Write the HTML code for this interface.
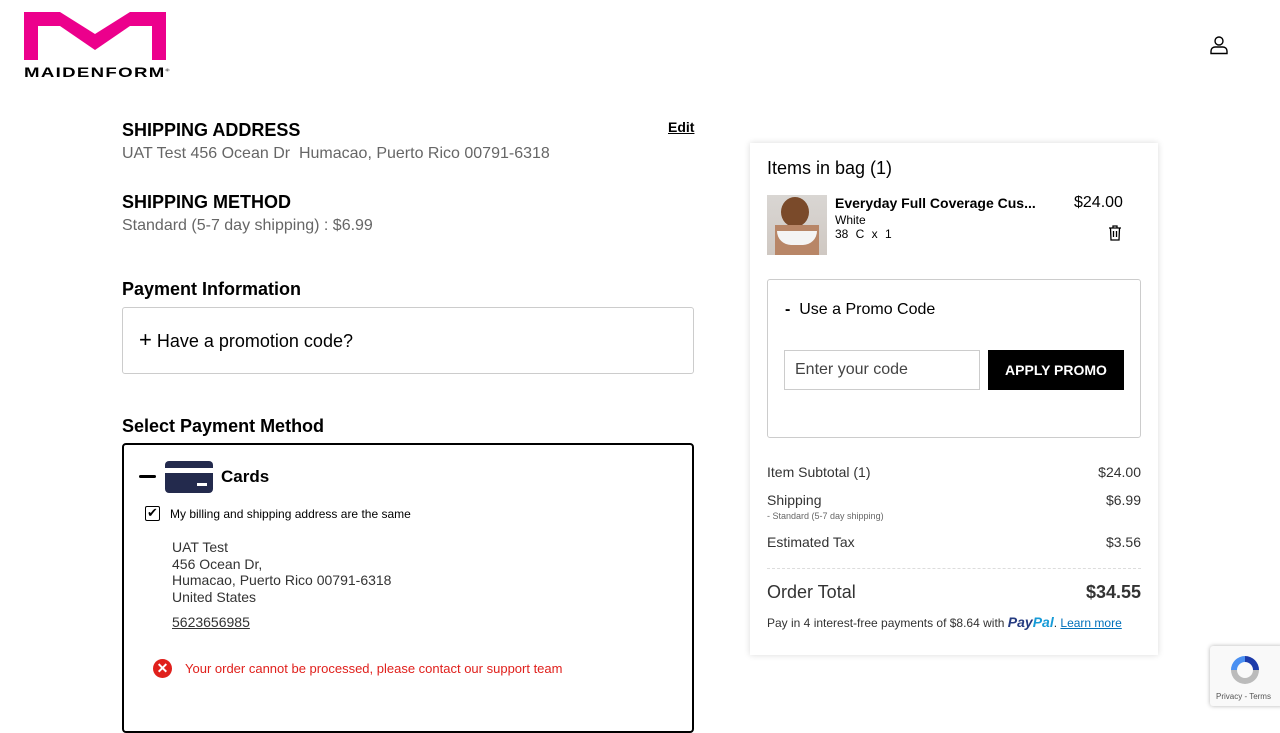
<!DOCTYPE html>
<html><head><style>
*{box-sizing:border-box;margin:0;padding:0}
body{width:1280px;height:720px;overflow:hidden;background:#fff;font-family:"Liberation Sans",sans-serif;color:#000;position:relative}
.a{position:absolute}
h2{font-size:18px;font-weight:bold;position:absolute}
.g{color:#666;font-size:16px;position:absolute}
</style></head><body>
<svg class="a" style="left:24px;top:12px" width="142" height="48" viewBox="0 0 142 48"><path d="M0 0H36L71 22L106 0H142V48H128V14H106L71 38L36 14H14V48H0Z" fill="#ec008c"/></svg>
<div class="a" style="left:24px;top:64px;font-size:14px;font-weight:bold;letter-spacing:1px;transform:scaleX(1.33);transform-origin:0 0">MAIDENFORM<sup style="font-size:4px">®</sup></div>
<svg class="a" style="left:1209px;top:35px" width="20" height="20" viewBox="0 0 20 20" fill="none" stroke="#000" stroke-width="1.4"><circle cx="10" cy="6" r="4"/><path d="M2 18.5V16a4 4 0 0 1 4-4h8a4 4 0 0 1 4 4v2.5Z"/></svg>

<h2 style="left:122px;top:120px">SHIPPING ADDRESS</h2>
<div class="a" style="left:668px;top:119px;font-size:14px;font-weight:bold;text-decoration:underline">Edit</div>
<div class="g" style="left:122px;top:145px">UAT Test 456 Ocean Dr&nbsp; Humacao, Puerto Rico 00791-6318</div>
<h2 style="left:122px;top:192px">SHIPPING METHOD</h2>
<div class="g" style="left:122px;top:217px">Standard (5-7 day shipping) : $6.99</div>
<h2 style="left:122px;top:279px">Payment Information</h2>
<div class="a" style="left:122px;top:307px;width:572px;height:67px;border:1px solid #ccc;border-radius:3px;padding:23px 16px;font-size:18px"><span style="font-size:22px;line-height:18px">+</span> Have a promotion code?</div>
<h2 style="left:122px;top:416px">Select Payment Method</h2>
<div class="a" style="left:122px;top:443px;width:572px;height:290px;border:2px solid #000;border-radius:4px"></div>
<div class="a" style="left:139px;top:475px;width:17px;height:3px;background:#000;border-radius:2px"></div>
<div class="a" style="left:165px;top:461px;width:48px;height:32px;background:#232a4d;border-radius:4px"><div class="a" style="left:0;top:7px;width:48px;height:5px;background:#fff"></div><div class="a" style="left:32px;top:22px;width:10px;height:3px;background:#fff"></div></div>
<div class="a" style="left:221px;top:467px;font-size:17px;font-weight:bold">Cards</div>
<div class="a" style="left:145px;top:506px;width:15px;height:15px;border:1.5px solid #000;border-radius:2px;font-size:13px;line-height:12px;text-align:center">✔</div>
<div class="a" style="left:170px;top:507px;font-size:12px">My billing and shipping address are the same</div>
<div class="a" style="left:172px;top:539px;font-size:14px;line-height:16.5px;color:#333">UAT Test<br>456 Ocean Dr,<br>Humacao, Puerto Rico 00791-6318<br>United States</div>
<div class="a" style="left:172px;top:614px;font-size:14px;color:#333;text-decoration:underline">5623656985</div>
<div class="a" style="left:153px;top:659px;width:19px;height:19px;border-radius:50%;background:#e0201c;color:#fff;font-size:14px;line-height:19px;text-align:center;font-weight:bold">✕</div>
<div class="a" style="left:185px;top:661px;font-size:13px;color:#e0201c">Your order cannot be processed, please contact our support team</div>

<div class="a" style="left:750px;top:143px;width:408px;height:512px;box-shadow:0 0 6px rgba(0,0,0,.15);background:#fff"></div>
<div class="a" style="left:767px;top:158px;font-size:18px">Items in bag (1)</div>
<div class="a" style="left:767px;top:195px;width:60px;height:60px;background:linear-gradient(#d9d6d3,#cfc8c2)"><div class="a" style="left:14px;top:2px;width:28px;height:30px;border-radius:50%;background:#7a4a2a"></div><div class="a" style="left:8px;top:30px;width:44px;height:30px;background:#b88667"></div><div class="a" style="left:10px;top:36px;width:40px;height:14px;background:#f4f4f4;border-radius:0 0 20px 20px"></div></div>
<div class="a" style="left:835px;top:195px;font-size:14px;font-weight:bold">Everyday Full Coverage Cus...</div>
<div class="a" style="left:835px;top:213px;font-size:12px">White</div>
<div class="a" style="left:835px;top:227px;font-size:12px;word-spacing:4px">38 C x 1</div>
<div class="a" style="left:1074px;top:194px;font-size:16px">$24.00</div>
<svg class="a" style="left:1108px;top:225px" width="14" height="16" viewBox="0 0 14 16" fill="none" stroke="#000" stroke-width="1.3"><path d="M1 3H13M5 3V1H9V3M2.5 3L3 15H11L11.5 3M5.5 6V12M8.5 6V12"/></svg>
<div class="a" style="left:767px;top:279px;width:374px;height:159px;border:1px solid #ccc;border-radius:3px"></div>
<div class="a" style="left:785px;top:301px;font-size:16px"><b>-</b>&nbsp; Use a Promo Code</div>
<div class="a" style="left:784px;top:350px;width:196px;height:40px;border:1px solid #ccc;padding:10px;font-size:16px;color:#444">Enter your code</div>
<div class="a" style="left:988px;top:350px;width:136px;height:40px;background:#000;color:#fff;font-size:14px;font-weight:bold;text-align:center;line-height:40px">APPLY PROMO</div>
<div class="a" style="left:767px;top:464px;font-size:14px;color:#333">Item Subtotal (1)</div><div class="a" style="right:139px;top:464px;font-size:14px;color:#333">$24.00</div>
<div class="a" style="left:767px;top:492px;font-size:14px;color:#333">Shipping</div><div class="a" style="right:139px;top:492px;font-size:14px;color:#333">$6.99</div>
<div class="a" style="left:767px;top:511px;font-size:9px;color:#666">- Standard (5-7 day shipping)</div>
<div class="a" style="left:767px;top:534px;font-size:14px;color:#333">Estimated Tax</div><div class="a" style="right:139px;top:534px;font-size:14px;color:#333">$3.56</div>
<div class="a" style="left:767px;top:568px;width:374px;border-top:1px dashed #ddd"></div>
<div class="a" style="left:767px;top:582px;font-size:18px;color:#333">Order Total</div><div class="a" style="right:139px;top:582px;font-size:18px;font-weight:bold;color:#333">$34.55</div>
<div class="a" style="left:767px;top:614px;font-size:12px;color:#333">Pay in 4 interest-free payments of $8.64 with <b style="font-style:italic;color:#253b80;font-size:14px">Pay<span style="color:#179bd7">Pal</span></b>. <span style="color:#0070ba;text-decoration:underline">Learn more</span></div>
<div class="a" style="left:1210px;top:646px;width:74px;height:60px;background:#f9f9f9;box-shadow:0 0 4px rgba(0,0,0,.3);border-radius:3px"></div>
<svg class="a" style="left:1227px;top:652px" width="36" height="36" viewBox="0 0 36 36"><path d="M18 4A14 14 0 0 1 32 18H26A8 8 0 0 0 18 10Z" fill="#1c3aa9"/><path d="M4 18A14 14 0 0 1 18 4V10A8 8 0 0 0 10 18Z" fill="#4a90f2"/><path d="M4 18H10A8 8 0 0 0 26 18H32A14 14 0 0 1 4 18Z" fill="#bbb"/></svg>
<div class="a" style="left:1216px;top:692px;font-size:8px;color:#555">Privacy - Terms</div>
</body></html>
